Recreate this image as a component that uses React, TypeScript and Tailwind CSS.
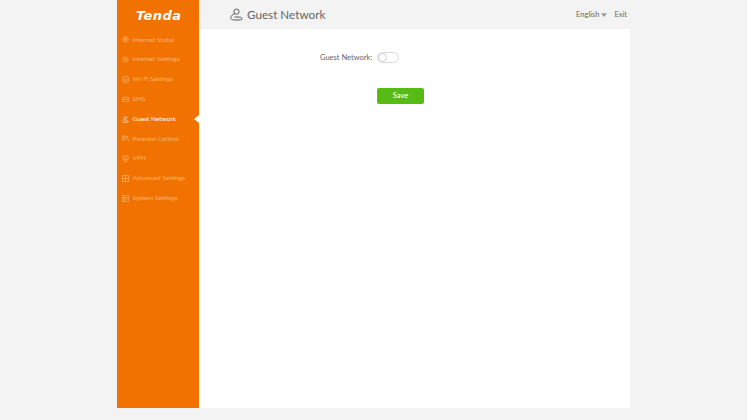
const menu = [
  { label: "Internet Status", icon: "status" },
  { label: "Internet Settings", icon: "settings" },
  { label: "Wi-Fi Settings", icon: "wifi" },
  { label: "SMS", icon: "sms" },
  { label: "Guest Network", icon: "guest", active: true },
  { label: "Parental Control", icon: "parental" },
  { label: "VPN", icon: "vpn" },
  { label: "Advanced Settings", icon: "advanced" },
  { label: "System Settings", icon: "system" },
];

function GuestIcon({ className }: { className?: string }) {
  return (
    <svg viewBox="0 0 16 16" fill="none" stroke="currentColor" strokeWidth="1.2" className={className}>
      <circle cx="8" cy="4.5" r="3.2" />
      <path d="M5.8 7 C3.2 8 1 9.5 1 12 C1 14 2.5 14.7 4.5 14.7 H13 C15.3 14.7 15.3 11.6 13 11.3 L5.5 11" />
    </svg>
  );
}

function MenuIcon({ name }: { name: string }) {
  const cls = "w-[7px] h-[7px] shrink-0";
  if (name === "guest") return <GuestIcon className={cls} />;
  return (
    <svg viewBox="0 0 16 16" fill="none" stroke="currentColor" strokeWidth="1.6" className={cls}>
      {name === "status" && (
        <>
          <circle cx="8" cy="8" r="6.5" />
          <circle cx="8" cy="8" r="2.5" fill="currentColor" />
        </>
      )}
      {name === "settings" && (
        <>
          <circle cx="8" cy="8" r="6" />
          <circle cx="8" cy="8" r="2" />
        </>
      )}
      {name === "wifi" && (
        <>
          <rect x="1.5" y="1.5" width="13" height="13" rx="1" />
          <path d="M5 5 V10 H11 V5" />
        </>
      )}
      {name === "sms" && (
        <>
          <rect x="1.5" y="3" width="13" height="10" rx="1.5" />
          <path d="M1.5 8 H14.5" />
        </>
      )}
      {name === "parental" && (
        <>
          <rect x="1.5" y="2" width="5" height="5" />
          <path d="M10 2 V7 M13 2 V7 M1.5 14 V10 H14.5 V14" />
        </>
      )}
      {name === "vpn" && (
        <>
          <rect x="2" y="1.5" width="12" height="9" rx="1" />
          <path d="M8 10.5 V14.5 M4 14.5 H12 M5 6 H11" />
        </>
      )}
      {name === "advanced" && (
        <>
          <rect x="1.5" y="1.5" width="13" height="13" />
          <path d="M8 1.5 V14.5 M1.5 8 H14.5" />
        </>
      )}
      {name === "system" && (
        <>
          <rect x="1.5" y="1.5" width="13" height="13" />
          <path d="M1.5 6 H14.5 M6 6 V14.5 M9 10 H12" />
        </>
      )}
    </svg>
  );
}

export default function App() {
  return (
    <div className="w-[747px] h-[420px] bg-[#f3f3f3] overflow-hidden font-['Lato',sans-serif]">
      <div className="ml-[117px] w-[513px] h-[408px] flex">
        <aside className="w-[82px] shrink-0 bg-[#f27200]">
          <div className="h-[30px] pl-[19px] flex items-center text-white text-[13px] leading-none font-bold italic font-['DejaVu_Sans',sans-serif] tracking-[0.4px]">
            Tenda
          </div>
          <nav className="flex flex-col">
            {menu.map((item) => (
              <div
                key={item.label}
                className={`relative h-[19.8px] pl-[5px] flex items-center gap-[3.5px] text-[6.5px] leading-none whitespace-nowrap ${
                  item.active ? "text-white" : "text-[#fbb36f]"
                }`}
              >
                <MenuIcon name={item.icon} />
                <span>{item.label}</span>
                {item.active && (
                  <span className="absolute right-0 top-[5.5px] w-0 h-0 border-y-[4.5px] border-y-transparent border-r-[5px] border-r-white" />
                )}
              </div>
            ))}
          </nav>
        </aside>
        <div className="flex-1 flex flex-col">
          <header className="h-[29px] flex items-center pl-[31px] pr-[3px] text-[#666]">
            <GuestIcon className="w-[13px] h-[13px] text-[#555]" />
            <h1 className="ml-[4px] text-[11.7px] leading-none">Guest Network</h1>
            <div className="ml-auto flex items-center text-[7.5px] leading-none">
              <span>English</span>
              <svg viewBox="0 0 8 5" className="ml-[2px] w-[6px] h-[4px] fill-[#999]">
                <path d="M0 0 H8 L4 5 Z" />
              </svg>
              <span className="ml-[7px]">Exit</span>
            </div>
          </header>
          <main className="flex-1 bg-white flex flex-col items-start pl-[178px]">
            <div className="mt-[23px] flex items-center gap-[5px] text-[7.5px] leading-none text-[#666] -ml-[57px]">
              <span>Guest Network:</span>
              <span className="relative w-[22px] h-[11px] rounded-full bg-white border border-[#d9d9d9]">
                <span className="absolute left-0 top-0 w-[9px] h-[9px] rounded-full bg-white border border-[#cfcfcf]" />
              </span>
            </div>
            <button className="mt-[25px] w-[47px] h-[16px] rounded-[2px] bg-[#56bb14] text-white text-[7.5px] leading-none font-medium">
              Save
            </button>
          </main>
        </div>
      </div>
    </div>
  );
}
